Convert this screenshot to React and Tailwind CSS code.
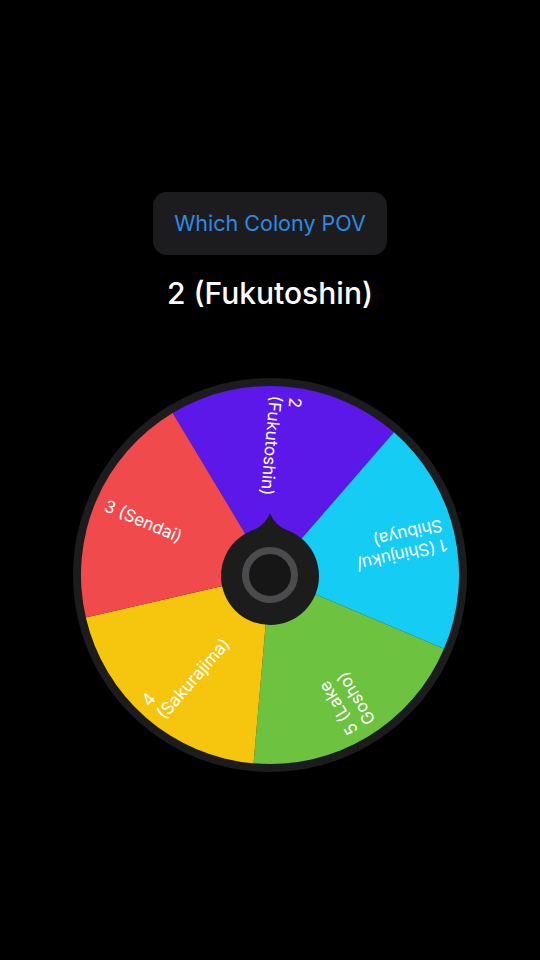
const segments = [
  { start: -31, color: '#5b18e8', lines: ['2', '(Fukutoshin)'] },
  { start: 41, color: '#15cdf4', lines: ['1 (Shinjuku/', 'Shibuya)'] },
  { start: 113, color: '#6dc23f', lines: ['5 (Lake', 'Gosho)'] },
  { start: 185, color: '#f6c60f', lines: ['4', '(Sakurajima)'] },
  { start: 257, color: '#f04a4d', lines: ['3 (Sendai)'] },
];

const C = 200;
const R = 189;

function point(angle, r) {
  const a = (angle * Math.PI) / 180;
  return [C + r * Math.sin(a), C - r * Math.cos(a)];
}

function slicePath(start) {
  const [x1, y1] = point(start, R);
  const [x2, y2] = point(start + 72, R);
  return `M ${C} ${C} L ${x1} ${y1} A ${R} ${R} 0 0 1 ${x2} ${y2} Z`;
}

function Wheel() {
  return (
    <div className="relative h-[400px] w-[400px]">
      <svg width="400" height="400" viewBox="0 0 400 400" className="absolute inset-0">
        <circle cx="200" cy="200" r="197" fill="#1c1c1e" />
        {segments.map((s) => (
          <path key={s.start} d={slicePath(s.start)} fill={s.color} />
        ))}
        {/* hub + pointer */}
        <path
          d="M 180 157 C 191 152, 197 146, 200 138 C 203 146, 209 152, 220 157 Z"
          fill="#1c1c1c"
        />
        <circle cx="200" cy="201" r="49" fill="#1c1c1c" />
        <circle cx="200" cy="200" r="24.5" fill="#161616" stroke="#4b4b4d" strokeWidth="7" />
      </svg>

      {segments.map((s) => (
        <div
          key={s.start}
          className="absolute left-[200px] top-[200px] h-0 w-0"
          style={{ transform: `rotate(${s.start + 36 + 90}deg)` }}
        >
          <div className="absolute left-[-179px] top-0 w-[120px] -translate-y-1/2 text-left text-[17px] leading-[20px] text-white">
            {s.lines.map((l) => (
              <div key={l} className="whitespace-nowrap">{l}</div>
            ))}
          </div>
        </div>
      ))}
    </div>
  );
}

export default function App() {
  return (
    <div
      className="flex min-h-[960px] w-full flex-col items-center bg-black pt-[192px]"
      style={{ fontFamily: 'Inter, "Liberation Sans", sans-serif' }}
    >
      <button className="flex h-[63px] w-[234px] items-center justify-center rounded-[14px] bg-[#1c1c1e] text-[21.5px] text-[#2d8ae3]">
        Which Colony POV
      </button>
      <h1 className="mt-[20px] text-[30px] font-medium leading-[36px] text-white">2 (Fukutoshin)</h1>
      <div className="mt-[64px]">
        <Wheel />
      </div>
    </div>
  );
}
